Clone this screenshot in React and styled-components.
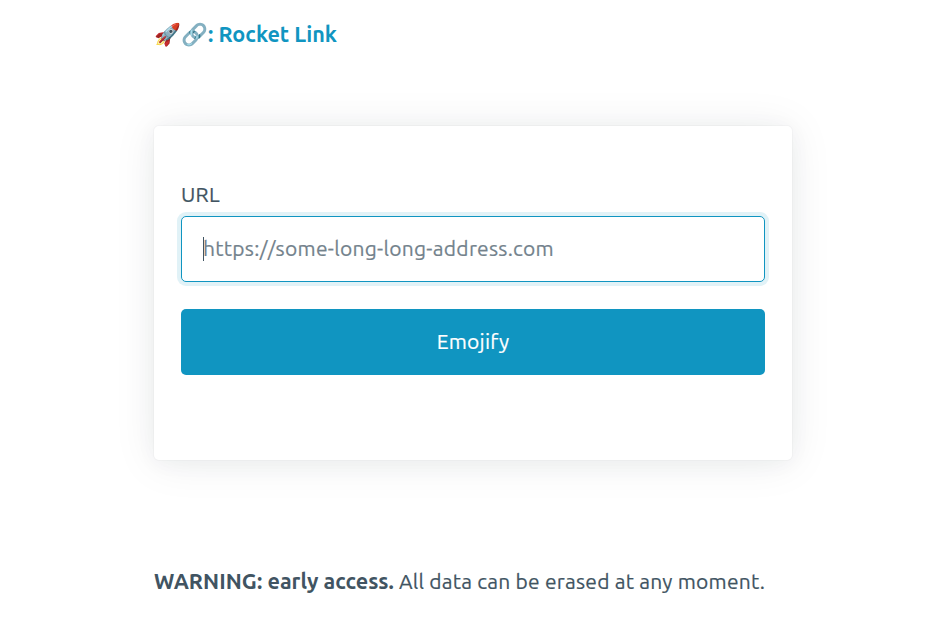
import React from "react";
import styled, { createGlobalStyle } from "styled-components";

const Global = createGlobalStyle`
  *, *::before, *::after { box-sizing: border-box; }
  body {
    margin: 0;
    background: #fff;
    color: #415462;
    font: 400 21px/32px Ubuntu, "Noto Sans", sans-serif;
    letter-spacing: 0.25px;
    -webkit-text-stroke-width: 0.2px;
    overflow: hidden;
  }
`;
const Page = styled.div`
  width: 638px;
  height: 617px;
  margin-left: 154px;
  display: flex;
  flex-direction: column;
`;
const Header = styled.header`
  height: 126px;
  padding-top: 18px;
`;
const Brand = styled.a`
  color: #1095c1;
  font-size: 21.6px;
  letter-spacing: 0.02px;
  font-weight: 700;
  -webkit-text-stroke-width: 0;
  text-decoration: none;
  white-space: nowrap;
`;
const Card = styled.main`
  height: 334px;
  padding: 52px 27px 0;
  border-radius: 5px;
  background: #fff;
  box-shadow:
    0 2.7px 21.6px rgba(27, 40, 50, 0.04),
    0 2.7px 43.2px rgba(27, 40, 50, 0.08),
    0 0 0 1px rgba(27, 40, 50, 0.024);
`;
const Label = styled.label`
  display: block;
  height: 38px;
`;
const Field = styled.div`
  position: relative;
`;
const Input = styled.input`
  display: block;
  width: 100%;
  height: 66px;
  padding: 0 21px 2px;
  border: 1px solid #1095c1;
  border-radius: 5px;
  outline: none;
  background: #fff;
  color: #415462;
  font: inherit;
  letter-spacing: 0.27px;
  box-shadow: 0 0 0 4px rgba(16, 149, 193, 0.125);
  &::placeholder { color: #73828c; opacity: 1; }
`;
const Caret = styled.span`
  position: absolute;
  left: 22px;
  top: 21px;
  width: 1px;
  height: 24px;
  background: #415462;
`;
const Button = styled.button`
  display: block;
  width: 100%;
  height: 66px;
  margin-top: 27px;
  padding: 0 0 2px;
  border: 0;
  border-radius: 5px;
  color: #fff;
  background: #1095c1;
  font: inherit;
  letter-spacing: inherit;
`;
const Footer = styled.footer`
  margin-top: 105px;
  letter-spacing: 0.23px;
  white-space: nowrap;
`;
const Strong = styled.strong`
  font-size: 21.6px;
  line-height: 1;
  letter-spacing: 0.02px;
  font-weight: 700;
  -webkit-text-stroke-width: 0;
`;

export default function App() {
  return (
    <>
      <Global />
      <Page>
        <Header><Brand>🚀🔗: Rocket Link</Brand></Header>
        <Card>
          <Label htmlFor="url">URL</Label>
          <Field>
            <Input id="url" placeholder="https://some-long-long-address.com" />
            <Caret />
          </Field>
          <Button>Emojify</Button>
        </Card>
        <Footer><Strong>WARNING: early access.</Strong> All data can be erased at any moment.</Footer>
      </Page>
    </>
  );
}
